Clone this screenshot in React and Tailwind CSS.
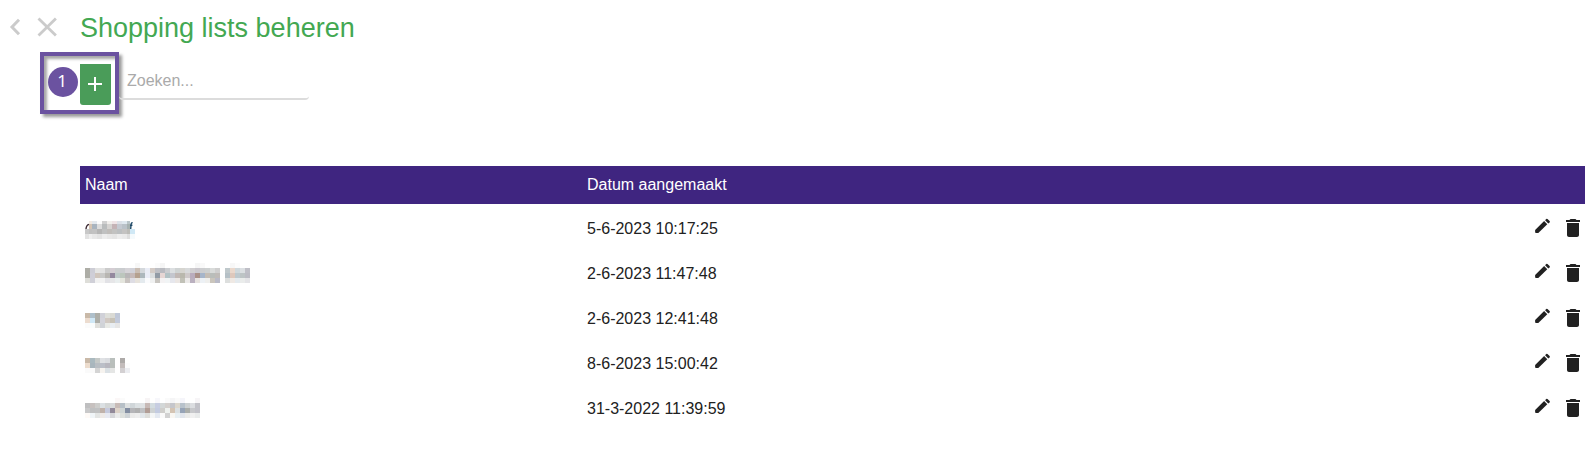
import React from "react";

// Each masked name is a mosaic of 5px cells; "-" leaves a cell empty.
// `edges` overrides the regular column grid.
const MASKS = {
  example: {
    y: 12,
    rows: [
      "- - - - - - - - - - #f7f7f7 - - - #fbfbfb #f5f5f5 - - - - - - #f6f6f6 #f9f9f9 - - - - - #f7f7f7 #fcfcfc - -",
      "#adada6 #cdcdd5 #e4e4e3 #e2e2e2 #cbcbcb #d4cdd3 #cbcecf #cacccf #d5d3d7 #d0d1d8 #c9bdb3 #d4d8dc #eaedf6 #d3cbc6 #bebfc4 #b9bac0 #cacccf #dcdfe1 #cfd3d3 #d6d5d0 #d8dadb #d0ced0 #cac7cd #cccdcf #cdd0d0 #d9dbda #cfcfcf - #bfc8cb #ead8cc #cfd8dc #dbdfe2 #bfbfc7",
      "#adada6 #cfced7 #d0c6bd #c9c9c8 #b8b6b2 #94899f #bfcac9 #bcc6bd #b8b6b7 #c5b9b8 #b5a18f #adb8bd #eaedf7 #dbdedf #929ba5 #e6d6d4 #b3c2c5 #c4c6ce #c1b8b5 #b9b8ad #cfcaca #b9acbd #a99088 #a6b5ca #c4bdb5 #b9bdba #bfbbb8 - #b5c0c6 #dec8bc #bec9ce #bdc4c5 #bcbcc4",
      "#deded9 #d0d0d8 #f1f1f1 #f2f2f2 #e2e2e6 #e6e6e8 #e9eeee #e4e5dd #c8c3c0 #dedde4 #e7e3dc #e4eaee #fafbfd #f0f1f1 #c8c5c0 #f4f2f3 #f1f4f5 #e6e7ed #ebe6e3 #c1c1b7 #ebe9e8 #bab0bf #e7e2df #edf1f5 #efefed #cac5bc #b9bac7 - #dddfde #efe9e4 #e4eaee #eaeceb #e4e4e7",
    ],
  },
  third: {
    y: 17,
    rows: [
      "#c9b9a8 #aebfca #adaea8 #d0d1d8 #dedfda #dadad4 #c0c8d8",
      "#ecdccf #d0e8f6 #adaea8 #d3d3da #d1c9c2 #c7c2b7 #c2cadb",
      "#fbfbfb #fafdfd #e0e0dc #d0d3d7 #e8e9e5 #e8edf2 #e6e6e6",
    ],
  },
  fourth: {
    y: 17,
    rows: [
      "#c9b9a8 #aab9bf #c5c9c7 #dfe1e4 #dadce0 #b9bfbc - #adaaa8",
      "#ecdccd #a9b6bd #b9bec3 #bbbfc8 #b8b7bf #b9bebb - #c3bcbb #fcfcfd",
      "#fafafa #fafafa #d4d4d4 #f6f3ef #dbe1e5 #e5e6e5 - #d3d0d2 #ecedf1",
    ],
  },
  fifth: {
    y: 12,
    rows: [
      "- - - - - - #fbf7f7 #fbfbfb - - - - #f7f4f5 - #f7f7fb - #fafafa #f5f5f6 #fafafa #f5f5fa - - #f7f5f7",
      "#bfbfc0 #c7c1bf #cdcdcb #dbe0e3 #d2d5d5 #d8dadb #c8bbb7 #b7c0c7 #dde0e0 #d0d6d9 #dce1e3 #dfe2e4 #c7b9b6 #d3dce0 #c7cde1 #d3d7d7 #d4d0cd #c5c6cb #dcd7cd #b8c2cb #cdd1d2 #dbdde0 #c2c2c8",
      "#c9c9ca #bfc0c1 #c0c1c2 #c0b2aa #c6cadd #928999 #ddd2c8 #cfd5d5 #828da1 #b5b5b8 #b0b0b0 #bfc0c3 #b19d96 #ced2d3 #c3cbe0 #cfcecb #eff2ef #d4c4b3 #dbe0e2 #96a3b6 #abaeaa #c7c8cb #c2c2c9",
      "#fefaf7 #f0f5f8 #e3e5e4 #eeeae7 #e8eaf2 #d7d7da #ebebeb #dde0dd #cfd4d7 #ebebea #eeeeee #e2e7eb #dededb #f4f6f6 #e4e9f1 #fafafa #d2d2d2 #f9f7f2 #e8eff2 #e1e5eb #ebebe9 #f0f0f0 #e9ebeb",
    ],
  },
  first: {
    y: 13,
    clip: 2,
    edges: [0, 4, 7, 12, 17, 22, 27, 32, 37, 42, 45, 50],
    rows: [
      "- #f1e9e2 #e3e8ed #fbfbfb #d0d0d0 #f1efec #efe4e6 #dce1e8 #dfe8ef #b9c4c8",
      "- #d6c4b2 #a9b4bf #dcdcdc #b9bcbd #d5d3d1 #c4b3b6 #c4c9d1 #b9c1c8 #a6b1b0",
      "#c8c8c8 #c0c0c0 #c2c2c2 #b5b5b5 #c0c1c1 #c0bdba #c2c2c1 #bcbfc1 #c4c3c2 #bcbcb8 #d0e8f5",
      "#e2e2e2 #efefef #e8e8e8 #e3e3e3 #ededed #e8e8e8 #e5e5e5 #ededed #eaeaea #dedede #f5fafc",
    ],
  },
};

const LISTS = [
  { mask: "first", created: "5-6-2023 10:17:25" },
  { mask: "example", created: "2-6-2023 11:47:48" },
  { mask: "third", created: "2-6-2023 12:41:48" },
  { mask: "fourth", created: "8-6-2023 15:00:42" },
  { mask: "fifth", created: "31-3-2022 11:39:59" },
];

function MaskedName({ name }) {
  const mask = MASKS[name];
  const edge = (i) => (mask.edges ? mask.edges[i] : i * 5);
  return (
    <svg width="180" height="45" shapeRendering="crispEdges" aria-hidden="true">
      {mask.rows.flatMap((row, r) =>
        row.split(" ").map((fill, c) => {
          if (fill === "-") return null;
          const cut = r === 0 && mask.clip ? mask.clip : 0;
          return (
            <rect
              key={`${r}-${c}`}
              x={edge(c)}
              y={mask.y + r * 5 + cut}
              width={edge(c + 1) - edge(c)}
              height={5 - cut}
              fill={fill}
            />
          );
        })
      )}
      {name === "first" && (
        <g shapeRendering="auto" fill="none" strokeWidth="1.4">
          <path d="M4 18.400C2 18.800 1.200 20.500 1 23" stroke="#3c2a35" />
          <path d="M47.600 16.800c-1.200-.2-1.500.8-1.600 2L45.700 23M45 19.300h2.400" stroke="#1f4a68" />
        </g>
      )}
    </svg>
  );
}

function PencilIcon() {
  return (
    <svg className="mb-[5px]" width="20" height="20" viewBox="0 0 20 20" fill="#212121" aria-hidden="true">
      <path d="M2.100 14.100 11.100 5.100 14.300 8.200 5.300 17H3a.9.9 0 0 1-.9-.9z" />
      <path d="M12.100 4.200 13.200 3.100a.9.9 0 0 1 1.300 0L16.600 5.100a.9.9 0 0 1 0 1.300L15.300 7.400z" />
    </svg>
  );
}

function TrashIcon() {
  return (
    <svg className="mb-[2px]" width="24" height="24" viewBox="0 0 24 24" fill="#212121" aria-hidden="true">
      <path d="M6 19c0 1.100.9 2 2 2h8c1.100 0 2-.9 2-2V7H6v12zM19 4h-3.500l-1-1h-5l-1 1H5v2h14V4z" />
    </svg>
  );
}

export default function App() {
  return (
    <div className="h-[463px] w-[1596px] overflow-hidden bg-white font-['Liberation_Sans',Arial,sans-serif] text-[16px] text-[#212121]">
      <header className="flex h-[52px] items-center pt-[2px]">
        <button className="ml-[9px] h-5 w-3" aria-label="Terug">
          <svg width="12" height="20" viewBox="0 0 12 20" fill="none" stroke="#cbcbcb" strokeWidth="3">
            <path d="M10 2.800 3 10l7 7.200" />
          </svg>
        </button>
        <button className="ml-4 h-5 w-5" aria-label="Sluiten">
          <svg width="20" height="20" viewBox="0 0 20 20" fill="none" stroke="#cbcbcb" strokeWidth="2.800">
            <path d="M1.500 1.500l17.400 17M18.900 1.500l-17.400 17" />
          </svg>
        </button>
        <h1 className="ml-[23px] pt-[2px] text-[27px] leading-8 text-[#43a852]">Shopping lists beheren</h1>
      </header>

      <div className="flex h-[114px] items-start pl-10">
        <div className="flex h-[62px] w-[79px] items-start border-4 border-[#6b52a0] pl-[3.500px] pt-2 shadow-[3px_3px_3px_rgba(0,0,0,0.4),inset_3px_3px_3px_rgba(0,0,0,0.35)]">
          <span className="mt-[2.500px] flex h-[30px] w-[30px] shrink-0 items-center justify-center rounded-full bg-[#6b52a0] pb-[2px] pr-px font-['Noto_Sans'] text-[17px] leading-none text-white">
            1
          </span>
          <button className="ml-[2.500px] flex h-[41px] w-[31px] shrink-0 items-center justify-center rounded-b-[3px] bg-[#4a9c59] pb-px pr-px" aria-label="Toevoegen">
            <svg width="16" height="16" viewBox="0 0 16 16" stroke="#fff" strokeWidth="2">
              <path d="M1 8h14M8 1v14" />
            </svg>
          </button>
        </div>
        <div className="mt-3 flex h-9 w-[190px] items-center rounded-[4px] border-b-2 border-[#dcdcdc] pl-2 text-[#aaaaaa]">
          Zoeken...
        </div>
      </div>

      <section className="ml-20 w-[1505px]">
        <div className="mb-[2px] flex h-[38px] items-center bg-[#3f2580] text-white">
          <div className="w-[502px] pl-[5px]">Naam</div>
          <div className="pl-[5px]">Datum aangemaakt</div>
        </div>
        {LISTS.map((list) => (
          <div key={list.mask} className="flex h-[45px] items-center">
            <div className="w-[502px] pl-[5px]">
              <MaskedName name={list.mask} />
            </div>
            <div className="grow pl-[5px]">{list.created}</div>
            <div className="flex items-center gap-2">
              <PencilIcon />
              <TrashIcon />
            </div>
          </div>
        ))}
      </section>
    </div>
  );
}
